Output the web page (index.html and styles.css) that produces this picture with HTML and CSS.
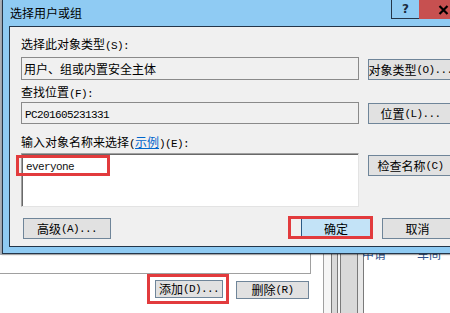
FILE: index.html
```html
<!DOCTYPE html>
<html lang="zh-CN">
<head>
<meta charset="utf-8">
<title>选择用户或组</title>
<link rel="stylesheet" href="styles.css">
</head>
<body>
<div class="page">
  <div class="leftcol">
    <div class="listbox"></div>
    <div class="listbtns">
      <div class="btn add">添加<span class="a">(D)...</span></div>
      <div class="btn del">删除<span class="a">(R)</span></div>
    </div>
  </div>
  <div class="splitters">
    <div class="sp w12 white"></div>
    <div class="sp ln light"></div>
    <div class="sp w7 pale"></div>
    <div class="sp ln"></div>
    <div class="sp w5 grey"></div>
    <div class="sp ln"></div>
    <div class="sp w2 pale"></div>
    <div class="sp ln"></div>
    <div class="sp w16 grey"></div>
    <div class="sp ln"></div>
    <div class="sp w5 soft"></div>
    <div class="sp ln"></div>
  </div>
  <div class="rightcol">
    <span class="rt">申请</span>
    <span class="rt">车间</span>
  </div>
</div>

<div class="dialog">
  <div class="titlebar">
    <div class="title">选择用户或组</div>
    <div class="cap-help">?</div>
    <div class="cap-close">
      <svg width="11" height="10" viewBox="0 0 11 10"><path d="M1.5 1 L9.5 9 M9.5 1 L1.5 9" stroke="#000" stroke-width="2.2" fill="none"/></svg>
    </div>
  </div>
  <div class="client">
    <div class="content">
      <div class="label l1">选择此对象类型<span class="a">(S):</span></div>
      <div class="row">
        <div class="field f1">用户、组或内置安全主体</div>
        <div class="btn side s1">对象类型<span class="a">(O)...</span></div>
      </div>
      <div class="label l2">查找位置<span class="a">(F):</span></div>
      <div class="row">
        <div class="field f2"><span class="a">PC201605231331</span></div>
        <div class="btn side s2">位置<span class="a">(L)...</span></div>
      </div>
      <div class="label l3">输入对象名称来选择<span class="a">(</span><span class="link">示例</span><span class="a">)(E):</span></div>
      <div class="row">
        <div class="field f3"><span class="a ev">everyone</span></div>
        <div class="btn side s3">检查名称<span class="a">(C)</span></div>
      </div>
      <div class="bottom">
        <div class="btn adv">高级<span class="a">(A)...</span></div>
        <div class="spacer"></div>
        <div class="btn ok">确定</div>
        <div class="btn cancel">取消</div>
      </div>
    </div>
  </div>
</div>

<div class="mark m-ev"></div>
<div class="mark m-ok"></div>
<div class="mark m-add"></div>
</body>
</html>
```
FILE: styles.css
```css
html, body {
  margin: 0;
  padding: 0;
}
body {
  width: 450px;
  height: 313px;
  overflow: hidden;
  position: relative;
  background: #fff;
  font: 12px "Noto Sans CJK SC", sans-serif;
  color: #000;
}
.a {
  font: 11px "Liberation Mono", monospace;
  letter-spacing: -0.6px;
}

/* background window */
.page {
  display: flex;
  height: 313px;
}
.leftcol {
  width: 311px;
  display: flex;
  flex-direction: column;
}
.listbox {
  box-sizing: border-box;
  height: 274px;
  border-right: 1px solid #a0a0a0;
  border-bottom: 1px solid #a0a0a0;
  background: linear-gradient(to right, #aab0b8 0 2px, transparent 2px) 0 0 / 100% 255px no-repeat, #fff;
}
.listbtns {
  display: flex;
  justify-content: flex-end;
  align-items: flex-start;
  gap: 13px;
  padding: 6px 2px 0 0;
}
.btn {
  box-sizing: border-box;
  background: #e1e1e1;
  border: 1px solid #6f8599;
  display: flex;
  align-items: center;
  justify-content: center;
  white-space: nowrap;
  overflow: hidden;
  line-height: 1;
}
.add {
  width: 68px;
  height: 18px;
}
.del {
  width: 73px;
  height: 18px;
  margin-top: 1px;
}
.splitters {
  display: flex;
  height: 313px;
}
.sp { height: 100%; }
.ln { width: 1px; background: #7a7a7a; }
.ln.light { background: #a0a0a0; }
.w12 { width: 12px; }
.w7 { width: 7px; }
.w5 { width: 5px; }
.w2 { width: 2px; }
.w16 { width: 16px; }
.white { background: #fff; }
.pale { background: #f6f6f6; }
.grey { background: #d9d9d9; }
.soft { background: #e8e8e8; }
.rightcol {
  flex: 1;
  display: flex;
  gap: 31px;
  padding-top: 247px;
  margin-left: -2px;
  white-space: nowrap;
}
.rt {
  color: #2d4f8a;
  line-height: 14px;
}

/* dialog window */
.dialog {
  position: absolute;
  left: 2px;
  top: 0;
  width: 472px;
  box-sizing: border-box;
  background: #8fcbf3;
  border: 1px solid #24364a;
  border-top: none;
  padding: 0 6px 6px;
  box-shadow: 0 1px 1px rgba(0, 0, 0, 0.35);
}
.titlebar {
  height: 26px;
  display: flex;
  align-items: flex-start;
}
.title {
  flex: 1;
  padding-left: 1px;
  line-height: 26px;
  font-size: 12px;
  color: #000;
}
.cap-help {
  box-sizing: border-box;
  width: 28px;
  height: 19px;
  border-left: 1px solid #24364a;
  border-bottom: 1px solid #24364a;
  display: flex;
  align-items: center;
  justify-content: center;
  font: bold 12px "DejaVu Sans", sans-serif;
  color: #1b2b40;
}
.cap-close {
  width: 48px;
  height: 19px;
  background: #c75050;
  display: flex;
  align-items: center;
  justify-content: center;
}
.client {
  border: 1px solid #24364a;
  background: #f0f0f0;
  padding: 10px 13px 7px 11px;
}
.content {
  width: 432px;
}
.label {
  height: 14px;
  line-height: 14px;
  white-space: nowrap;
}
.l1 { margin-bottom: 6px; }
.l2 { margin-top: 5px; margin-bottom: 3px; }
.l3 { margin-top: 11px; margin-bottom: 4px; }
.link {
  color: #0066cc;
  text-decoration: underline;
}
.row {
  display: flex;
  gap: 9px;
  align-items: flex-start;
}
.field {
  box-sizing: border-box;
  width: 338px;
  border: 1px solid #8a8a8a;
  white-space: nowrap;
}
.f1 {
  height: 23px;
  line-height: 21px;
  padding-left: 2px;
}
.f2 {
  height: 22px;
  line-height: 19px;
  padding-left: 3px;
}
.f3 {
  height: 54px;
  background: #fff;
  border-color: #a0a0a0 #e3e3e3 #e3e3e3 #a0a0a0;
  box-shadow: inset 1px 1px 0 #696969;
  padding: 4px 4px;
  line-height: 14px;
}
.ev {
  color: #111;
}
.side {
  width: 85px;
  height: 21px;
}
.s1 { margin-top: 2px; }
.s2 { margin-top: 1px; }
.s3 { margin-top: 2px; }
.bottom {
  display: flex;
  align-items: flex-start;
  gap: 11px;
  margin-top: 11px;
}
.spacer { flex: 1; }
.adv {
  width: 88px;
  height: 21px;
  margin-left: 2px;
}
.ok {
  width: 70px;
  height: 21px;
  background: #c3e3f7;
  border-color: #2b5a85;
}
.cancel {
  width: 71px;
  height: 21px;
}

/* annotation boxes */
.mark {
  position: absolute;
  box-sizing: border-box;
  border: 3px solid #e23b3d;
}
.m-ev {
  left: 16px;
  top: 155px;
  width: 94px;
  height: 21px;
}
.m-ok {
  left: 288px;
  top: 216px;
  width: 85px;
  height: 23px;
}
.m-add {
  left: 147px;
  top: 274px;
  width: 82px;
  height: 30px;
}
```
